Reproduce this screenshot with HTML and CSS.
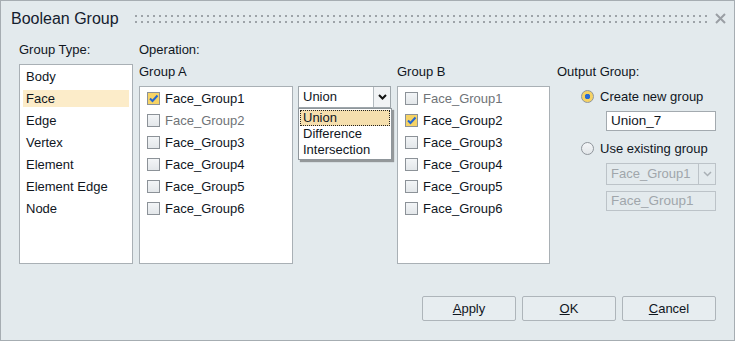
FILE: index.html
```html
<!DOCTYPE html>
<html lang="en">

<head>
    <link rel="stylesheet" href="styles.css">
</head>

<body>
    <div class="dialog">
        <div class="titlebar">
            <span class="title">Boolean Group</span>
            <span class="grip"></span>
            <svg class="close" width="11" height="11" viewBox="0 0 11 11">
                <path d="M1 1 L10 10 M10 1 L1 10" stroke="#9a9fa4" stroke-width="2" fill="none" />
            </svg>
        </div>

        <div class="content">
            <div class="col-type">
                <div class="label">Group Type:</div>
                <div class="list type-list">
                    <div class="item">Body</div>
                    <div class="item selected">Face</div>
                    <div class="item">Edge</div>
                    <div class="item">Vertex</div>
                    <div class="item">Element</div>
                    <div class="item">Element Edge</div>
                    <div class="item">Node</div>
                </div>
            </div>

            <div class="col-op">
                <div class="label op-label">Operation:</div>
                <div class="op-row">
                    <div class="col-a">
                        <div class="label">Group A</div>
                        <div class="list check-list">
                            <div class="item"><span class="cb checked"></span>Face_Group1</div>
                            <div class="item disabled"><span class="cb"></span>Face_Group2</div>
                            <div class="item"><span class="cb"></span>Face_Group3</div>
                            <div class="item"><span class="cb"></span>Face_Group4</div>
                            <div class="item"><span class="cb"></span>Face_Group5</div>
                            <div class="item"><span class="cb"></span>Face_Group6</div>
                        </div>
                    </div>

                    <div class="col-combo">
                        <div class="combo">
                            <span class="combo-text">Union</span>
                            <span class="combo-btn">
                                <svg width="9" height="6" viewBox="0 0 9 6">
                                    <path d="M1 1 L4.5 4.5 L8 1" stroke="#111" stroke-width="2" fill="none" />
                                </svg>
                            </span>
                        </div>
                        <div class="popup">
                            <div class="opt active">Union</div>
                            <div class="opt">Difference</div>
                            <div class="opt">Intersection</div>
                        </div>
                    </div>

                    <div class="col-b">
                        <div class="label">Group B</div>
                        <div class="list check-list">
                            <div class="item disabled"><span class="cb"></span>Face_Group1</div>
                            <div class="item"><span class="cb checked"></span>Face_Group2</div>
                            <div class="item"><span class="cb"></span>Face_Group3</div>
                            <div class="item"><span class="cb"></span>Face_Group4</div>
                            <div class="item"><span class="cb"></span>Face_Group5</div>
                            <div class="item"><span class="cb"></span>Face_Group6</div>
                        </div>
                    </div>

                    <div class="col-out">
                        <div class="label">Output Group:</div>
                        <div class="radio-row first"><span class="radio on"></span>Create new group</div>
                        <div class="field">Union_7</div>
                        <div class="radio-row"><span class="radio"></span>Use existing group</div>
                        <div class="combo off">
                            <span class="combo-text">Face_Group1</span>
                            <span class="combo-btn">
                                <svg width="9" height="6" viewBox="0 0 9 6">
                                    <path d="M1 1 L4.5 4.5 L8 1" stroke="#a9b0b5" stroke-width="1.5" fill="none" />
                                </svg>
                            </span>
                        </div>
                        <div class="field off">Face_Group1</div>
                    </div>
                </div>
            </div>
        </div>

        <div class="footer">
            <button class="btn"><u>A</u>pply</button>
            <button class="btn"><u>O</u>K</button>
            <button class="btn"><u>C</u>ancel</button>
        </div>
    </div>
</body>

</html>
```

FILE: styles.css
```css
body {
    margin: 0;
    font-family: "Liberation Sans", Arial, sans-serif;
    font-size: 13px;
    color: #10161e;
}

.dialog {
    width: 735px;
    height: 341px;
    box-sizing: border-box;
    border: 1px solid #a6adb2;
    background: #e3eaed;
    display: flex;
    flex-direction: column;
}

/* title bar */
.titlebar {
    height: 40px;
    box-sizing: border-box;
    padding: 8px 8px 0 10px;
    display: flex;
    align-items: flex-start;
}

.title {
    font-size: 16px;
    line-height: 20px;
    color: #14202e;
}

.grip {
    flex: 1;
    height: 8px;
    margin: 6px 0 0 16px;
    background:
        linear-gradient(to bottom, transparent 2px, #e3eaed 2px) 0 0 / 6px 6px,
        linear-gradient(to right, #9da3a8 2px, transparent 2px) 0 0 / 6px 6px;
}

.close {
    margin: 4px 0 0 8px;
}

/* main area */
.content {
    display: flex;
    padding-left: 18px;
}

.label {
    height: 18px;
    line-height: 18px;
    margin-bottom: 5px;
}

.op-label {
    margin-bottom: 4px;
}

.col-type {
    width: 114px;
}

.col-op {
    margin-left: 6px;
}

.op-row {
    display: flex;
}

.list {
    background: #fff;
    border: 1px solid #a9b0b5;
    box-sizing: border-box;
    padding: 3px;
}

.type-list {
    height: 200px;
}

.list .item {
    height: 17px;
    line-height: 17px;
    margin-bottom: 5px;
    padding-left: 3px;
    white-space: nowrap;
}

.type-list .selected {
    background: #fcecc9;
}

.col-a {
    width: 154px;
}

.col-b {
    width: 153px;
    margin-left: 6px;
}

.check-list {
    height: 178px;
}

.check-list .item {
    display: flex;
    align-items: center;
    padding-left: 4px;
}

.check-list .disabled {
    color: #6f7377;
}

.cb {
    width: 13px;
    height: 13px;
    box-sizing: border-box;
    border: 1px solid #8c9298;
    background: linear-gradient(#f3f5f7, #e3e7ea);
    margin-right: 5px;
    flex-shrink: 0;
}

.cb.checked {
    background: #f6d365 url("data:image/svg+xml;utf8,<svg xmlns='http://www.w3.org/2000/svg' width='11' height='11'><path d='M2 5.5 L4.5 8 L9.5 2.5' stroke='%232366d1' stroke-width='2' fill='none'/></svg>") no-repeat center;
}

/* operation combo */
.col-combo {
    width: 93px;
    margin-left: 5px;
    padding-top: 23px;
    position: relative;
}

.combo {
    height: 22px;
    box-sizing: border-box;
    border: 1px solid #9ea6ab;
    background: #fff;
    display: flex;
}

.combo-text {
    flex: 1;
    line-height: 20px;
    padding-left: 4px;
}

.combo-btn {
    width: 16px;
    border-left: 1px solid #b3babf;
    background: #f1f3f5;
    display: flex;
    align-items: center;
    justify-content: center;
}

.popup {
    position: absolute;
    top: 45px;
    left: 0;
    width: 94px;
    box-sizing: border-box;
    background: #fff;
    border: 1px solid #8f969b;
    padding: 1px;
    box-shadow: 2px 2px 1px rgba(0, 0, 0, 0.35);
}

.opt {
    height: 16px;
    line-height: 16px;
    padding-left: 3px;
    box-sizing: border-box;
}

.opt.active {
    background: #f5dfae;
    border: 1px dotted #222;
    line-height: 14px;
    padding-left: 2px;
}

/* output group */
.col-out {
    margin-left: 7px;
}

.radio-row {
    height: 18px;
    display: flex;
    align-items: center;
    margin: 8px 0 0 24px;
}

.radio-row.first {
    margin-top: 6px;
    margin-bottom: 6px;
}

.radio {
    width: 13px;
    height: 13px;
    box-sizing: border-box;
    border-radius: 50%;
    border: 1px solid #8f959b;
    background: linear-gradient(#f4f6f8, #e2e6e9);
    margin-right: 6px;
}

.radio.on {
    background: radial-gradient(circle, #2a6bd4 2.5px, #f6d365 3px);
}

.field {
    width: 110px;
    height: 20px;
    box-sizing: border-box;
    border: 1px solid #a3aaaf;
    background: #fff;
    margin-left: 49px;
    line-height: 18px;
    padding-left: 4px;
    font-size: 13.5px;
}

.col-out .combo.off {
    width: 110px;
    margin: 6px 0 0 49px;
    background: #e3eaed;
    border-color: #bcc3c8;
    color: #a0a6ab;
}

.combo.off .combo-btn {
    background: #e3eaed;
    border-left-color: #bcc3c8;
}

.field.off {
    margin-top: 6px;
    background: #e3eaed;
    border-color: #bcc3c8;
    color: #a0a6ab;
}

/* buttons */
.footer {
    margin-top: auto;
    display: flex;
    justify-content: flex-end;
    gap: 6px;
    padding: 0 18px 19px 0;
}

.btn {
    width: 94px;
    height: 25px;
    border: 1px solid #aeb5ba;
    border-radius: 2px;
    background: #e7edf0;
    font-family: "Liberation Sans", Arial, sans-serif;
    font-size: 13px;
    color: #10161e;
    padding: 0;
}
```
